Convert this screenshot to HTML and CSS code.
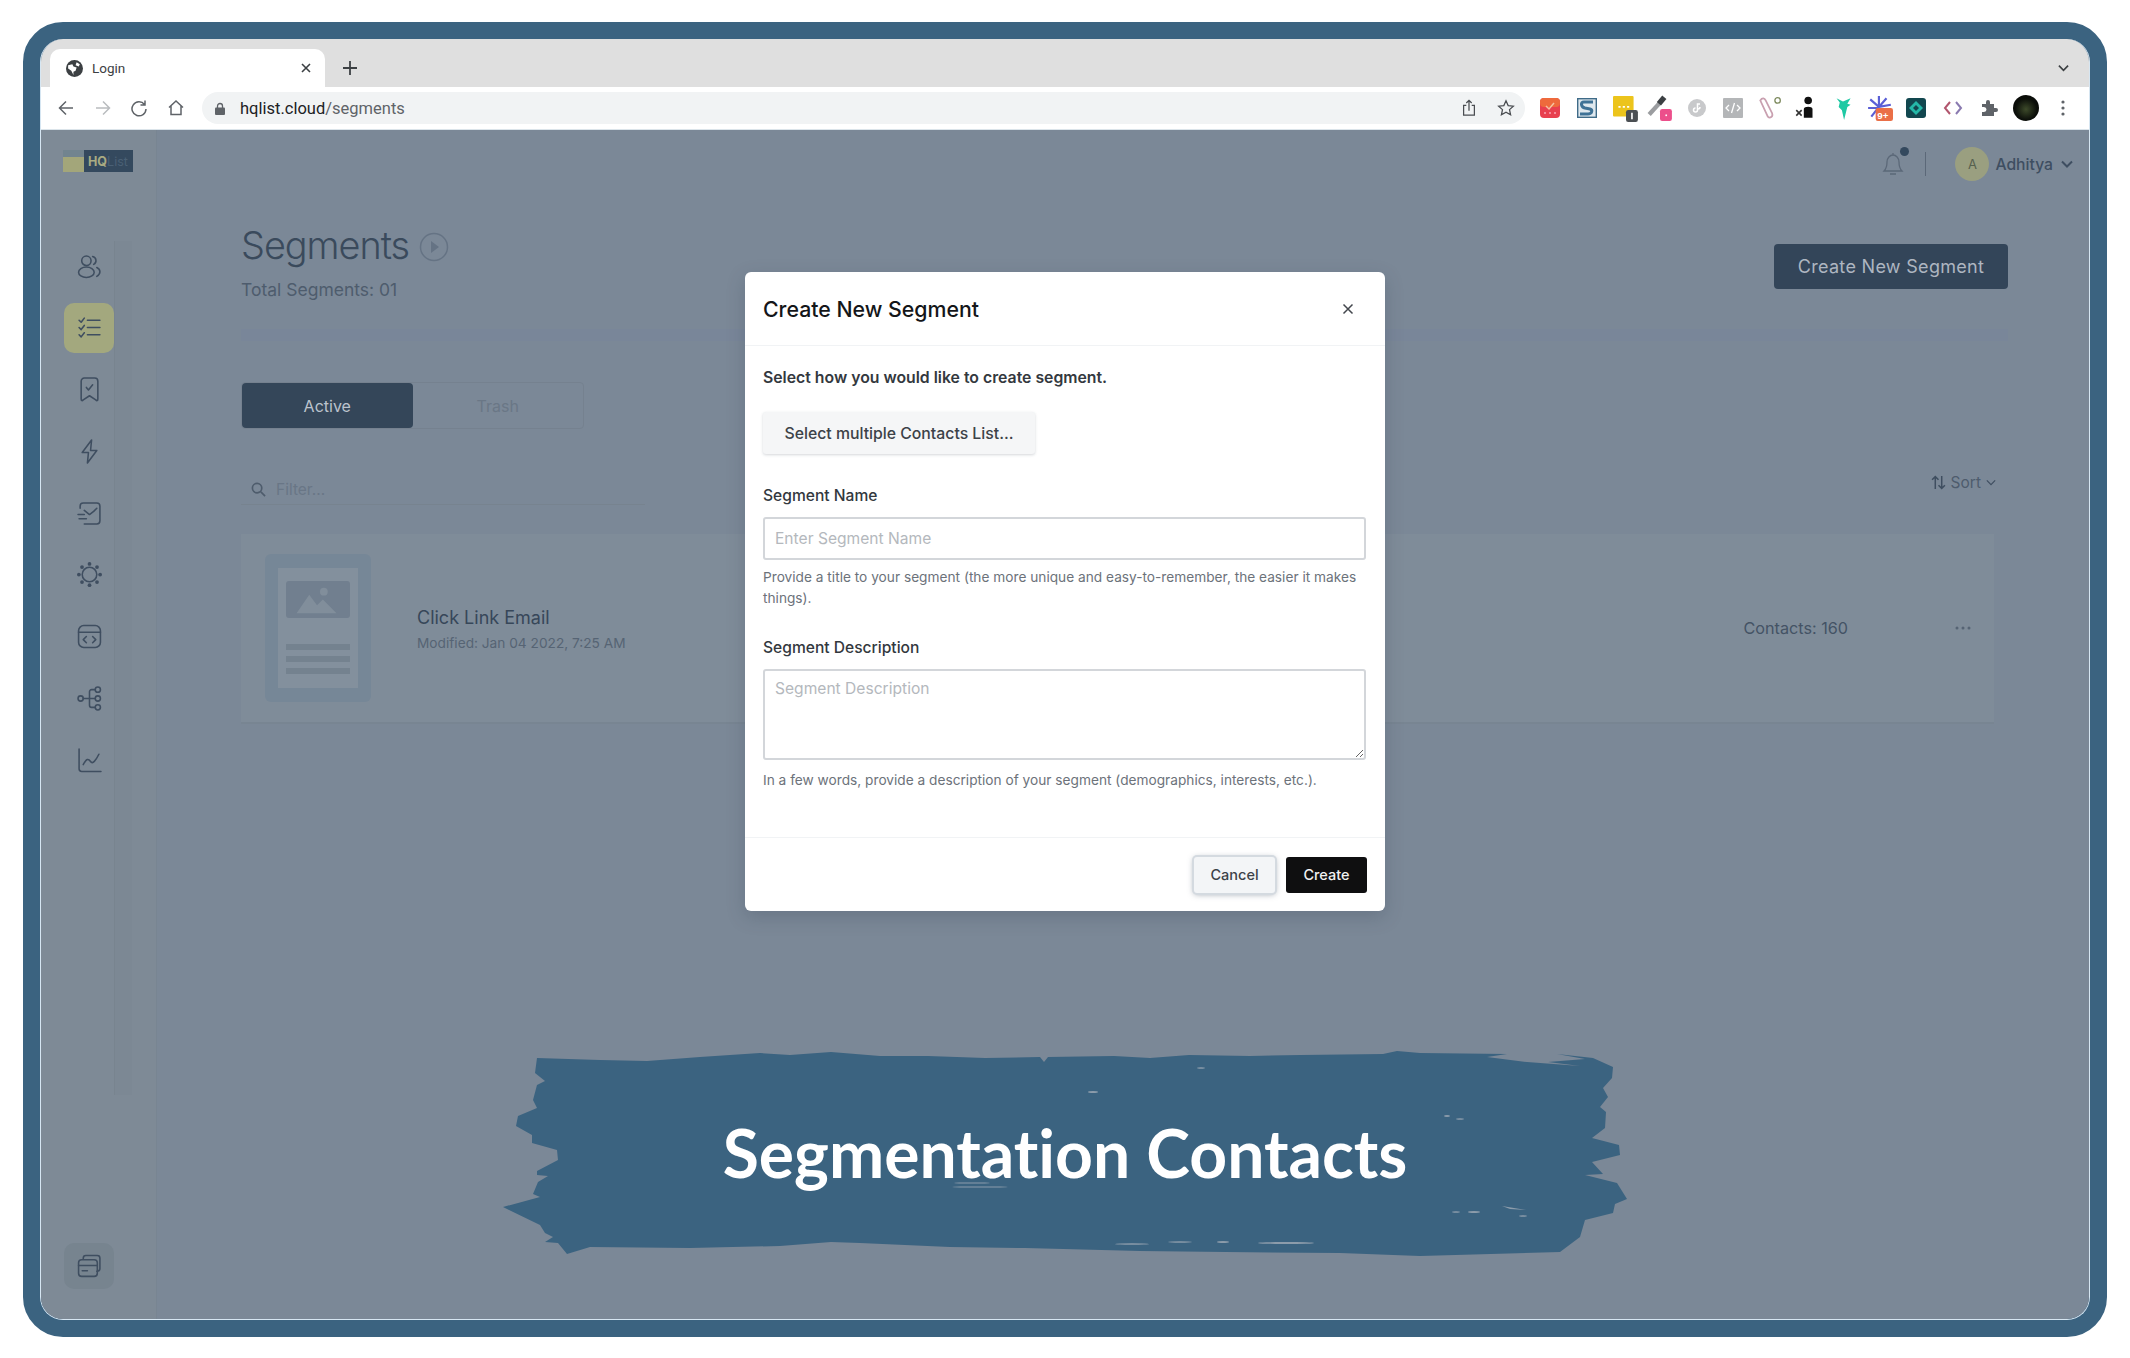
FILE: index.html
```html
<!DOCTYPE html>
<html>
<head>
	<title>Segments</title>
	<meta charset="utf-8">
	<link rel="stylesheet" href="styles.css">
</head>
<body>
<div class="frame">
<div class="screen">

	<div class="tabstrip">
		<div class="tab">
			<svg class="favicon" viewBox="0 0 16 16"><circle cx="8" cy="8" r="8" fill="#3c4043"/><path d="M2 5l4-1 1 2 3 1-1 3-2 1v3L5 10 2 8zM10 2l3 2-1 2-3-1z" fill="#fff"/></svg>
			<span class="tab-title">Login</span>
			<svg class="tab-close" viewBox="0 0 12 12"><path d="M2 2l8 8M10 2l-8 8"/></svg>
		</div>
		<svg class="tab-new" viewBox="0 0 14 14"><path d="M7 0v14M0 7h14"/></svg>
		<svg class="tab-list" viewBox="0 0 12 8"><path d="M1 1.500l5 5 5-5"/></svg>
	</div>

	<div class="toolbar">
		<div class="nav-btn"><svg viewBox="0 0 18 18"><path d="M16 9H2.500M9 2.500L2.500 9 9 15.500"/></svg></div>
		<div class="nav-btn off"><svg viewBox="0 0 18 18"><path d="M2 9h13.500M9 2.500L15.500 9 9 15.500"/></svg></div>
		<div class="nav-btn"><svg viewBox="0 0 18 18"><path d="M14.500 5.500A7 7 0 1 0 16 10M15 1.500v4.500h-4.500"/></svg></div>
		<div class="nav-btn"><svg viewBox="0 0 18 18"><path d="M2 8.500L9 2l7 6.500M4 7v8.500h10V7"/></svg></div>
		<div class="omnibox">
			<svg class="lock" viewBox="0 0 10 13"><path d="M2.500 6V4a2.500 2.500 0 0 1 5 0v2" fill="none" stroke="#5f6368" stroke-width="1.300"/><rect y="5.500" width="10" height="7.500" rx="1" fill="#5f6368"/></svg>
			<span class="url">hqlist.cloud<span class="url-path">/segments</span></span>
			<svg class="omni-icon share" viewBox="0 0 16 20"><path d="M5 7H2v11h12V7h-3M8 13V2M5 4.500L8 1.500l3 3"/></svg>
			<svg class="omni-icon" viewBox="0 0 20 20"><path d="M10 2l2.400 5.300 5.800.6-4.300 3.900 1.200 5.700L10 14.600l-5.100 2.900 1.200-5.700L1.800 7.900l5.800-.6z"/></svg>
		</div>
		<div class="extensions">
			<div class="ext"><svg viewBox="0 0 20 20"><rect width="20" height="20" rx="4" fill="#e8404f"/><rect width="20" height="9" rx="4" fill="#ee6a3c"/><path d="M6 8l3 3 5-6" fill="none" stroke="#f6c3a0" stroke-width="1.500"/><path d="M4 15h2M9 15h2M14 15h2" stroke="#f7a3b4" stroke-width="1.500"/></svg></div>
			<div class="ext"><svg viewBox="0 0 20 20"><rect x=".7" y=".7" width="18.600" height="18.600" fill="#dfe8ee" stroke="#3f6b88" stroke-width="1.400"/><path d="M16 4H7C3 4 4 9 8 10l5 1c3 1 2 5-2 5H3" fill="none" stroke="#3f7296" stroke-width="3"/></svg></div>
			<div class="ext big shifted"><svg viewBox="0 0 24 24"><rect x="0" y="0" width="19" height="19" rx="1" fill="#ecc41c"/><path d="M5 10h2M9 10h2M13 10h2" stroke="#fff" stroke-width="1.500"/><rect x="12" y="13" width="11" height="11" rx="2" fill="#4b4f53"/><path d="M17.500 15.500v6" stroke="#fff" stroke-width="1.500"/></svg></div>
			<div class="ext big"><svg viewBox="0 0 24 24"><path d="M2 18L12 7" stroke="#9b9da0" stroke-width="4"/><path d="M11 8l5-6" stroke="#3c4043" stroke-width="5"/><rect x="12" y="13" width="11" height="11" rx="2" fill="#ec4f8b"/><rect x="17" y="18" width="1.500" height="1.500" fill="#fff"/></svg></div>
			<div class="ext"><svg viewBox="0 0 20 20"><circle cx="10" cy="10" r="9" fill="#c8c9cb"/><path d="M13 6h-2.500v6a2 2 0 1 1-2-2M13 9a2 2 0 0 1-2 2" fill="none" stroke="#fff" stroke-width="1.500"/></svg></div>
			<div class="ext"><svg viewBox="0 0 20 20"><rect width="20" height="20" rx="1" fill="#b4b6b8"/><path d="M6 7l-3 3 3 3M14 7l3 3-3 3M11.500 5l-3 10" fill="none" stroke="#fff" stroke-width="1.300"/></svg></div>
			<div class="ext big"><svg viewBox="0 0 24 24"><path d="M3 5c2-3 4-2 5 0l6 12c1 3-2 5-4 3z" fill="none" stroke="#c9a0b0" stroke-width="1.600"/><circle cx="19" cy="5" r="2.500" fill="none" stroke="#7d8a5e" stroke-width="1.200"/></svg></div>
			<div class="ext big"><svg viewBox="0 0 24 24"><circle cx="14" cy="5" r="3.500" fill="#111"/><path d="M10 21v-8c0-3 8-3 8 0v8z" fill="#111"/><path d="M3 14l5 5M8 14l-5 5" stroke="#333" stroke-width="1.500"/></svg></div>
			<div class="ext big"><svg viewBox="0 0 24 24"><path d="M6 3l6 3 7-3-3 5 3 1-3 2-1 4-2 8-2-9-3-3 1-4z" fill="#1ec9a4"/></svg></div>
			<div class="ext big"><svg viewBox="0 0 24 24"><path d="M11 1v10M3 4l8 7M1 12h10M4 20l7-9M18 3l-7 8M22 9l-11 2" stroke="#5a5fd6" stroke-width="2"/><rect x="8" y="12" width="16" height="12" rx="2" fill="#ea6f47"/><text x="9.500" y="22" class="ext-badge">9+</text></svg></div>
			<div class="ext"><svg viewBox="0 0 20 20"><rect width="20" height="20" rx="3" fill="#12474f"/><path d="M10 3l7 7-7 7-7-7z" fill="#24b8a8"/><path d="M10 7l3 3-3 3-3-3z" fill="#12474f"/></svg></div>
			<div class="ext"><svg viewBox="0 0 20 16"><path d="M7 2L2 8l5 6" fill="none" stroke="#b2566e" stroke-width="2"/><path d="M13 2l5 6-5 6" fill="none" stroke="#8a7ab0" stroke-width="2"/></svg></div>
			<div class="ext"><svg viewBox="0 0 20 20"><path d="M3 6h4V4a2 2 0 0 1 4 0v2h4v4h2a2 2 0 0 1 0 4h-2v4H3v-4h2a2 2 0 0 0 0-5H3z" fill="#5f6368"/></svg></div>
			<div class="ext"><div class="profile"></div></div>
			<div class="ext"><svg class="dots" viewBox="0 0 4 16"><circle cx="2" cy="2" r="1.600"/><circle cx="2" cy="8" r="1.600"/><circle cx="2" cy="14" r="1.600"/></svg></div>
		</div>
	</div>

	<div class="app">
		<aside class="sidebar">
			<div class="logo"><span class="logo-pic"></span><span class="logo-hq">HQ</span><span class="logo-list">List</span></div>
			<nav class="menu">
				<a class="menu-item"><svg viewBox="0 0 24 24"><circle cx="9" cy="6.500" r="4.500"/><ellipse cx="9" cy="17.500" rx="7.500" ry="5"/><path d="M15 2.500a4 4 0 0 1 1 7.500M19 13c4 2 4 6 0 8.500"/></svg></a>
				<a class="menu-item active"><svg viewBox="0 0 24 24"><path d="M2 5l2 2 3-4M2 12l2 2 3-4M2 19l2 2 3-4M10 5h12M10 12h12M10 19h12"/></svg></a>
				<a class="menu-item"><svg viewBox="0 0 24 24"><path d="M4 21V4a3 3 0 0 1 3-3h10a3 3 0 0 1 3 3v17c0 2-1 2-2 1l-6-4-6 4c-1 1-2 1-2-1zM9 10l2 2.500 4-5"/></svg></a>
				<a class="menu-item"><svg viewBox="0 0 24 24"><path d="M14 1L5 13h6l-1 10 9-12h-6z"/></svg></a>
				<a class="menu-item"><svg viewBox="0 0 24 24"><path d="M3 7V5a3 3 0 0 1 3-3h13a3 3 0 0 1 3 3v14a3 3 0 0 1-3 3H7M7 9l5 4 4-3 3-3M1 13h6M2 17h7"/></svg></a>
				<a class="menu-item"><svg viewBox="0 0 24 24"><circle cx="12" cy="12" r="7"/><g class="dotted"><circle cx="12" cy="1.800" r="1.800"/><circle cx="12" cy="22.200" r="1.800"/><circle cx="1.800" cy="12" r="1.800"/><circle cx="22.200" cy="12" r="1.800"/><circle cx="4.800" cy="4.800" r="1.800"/><circle cx="19.200" cy="4.800" r="1.800"/><circle cx="4.800" cy="19.200" r="1.800"/><circle cx="19.200" cy="19.200" r="1.800"/></g></svg></a>
				<a class="menu-item"><svg viewBox="0 0 24 24"><rect x="1.500" y="1.500" width="21" height="21" rx="5"/><path d="M1.500 8h21M9 12l-3 3 3 3M15 12l3 3-3 3"/></svg></a>
				<a class="menu-item"><svg viewBox="0 0 24 24"><circle cx="3.500" cy="12" r="2.500"/><circle cx="20" cy="3.500" r="2.500"/><circle cx="20" cy="12" r="2.500"/><circle cx="20" cy="20.500" r="2.500"/><path d="M6 12h11.500M17.500 3.500H14a2 2 0 0 0-2 2v13a2 2 0 0 0 2 2h3.500"/></svg></a>
				<a class="menu-item"><svg viewBox="0 0 24 24"><path d="M2 1v19a2.500 2.500 0 0 0 2.500 2.500H23M6 16c3-6 5-6 7-3s5-1 8-7"/></svg></a>
			</nav>
			<a class="menu-item card-item"><svg viewBox="0 0 24 24"><path d="M6 5V4a2.500 2.500 0 0 1 2.500-2.500h11A2.500 2.500 0 0 1 22 4v10a2.500 2.500 0 0 1-2.500 2.500H19"/><rect x="1.500" y="5.500" width="18" height="16" rx="3"/><path d="M1.500 11h18M5 16h5"/></svg></a>
		</aside>

		<main class="main">
			<div class="topbar">
				<div class="bell">
					<svg viewBox="0 0 24 26"><path d="M3 20c2-2 3-4 3-9 0-4 3-7 6-7s6 3 6 7c0 5 1 7 3 9zM9 23h6M12 4V2"/></svg>
					<span class="bell-dot"></span>
				</div>
				<span class="top-sep"></span>
				<span class="avatar">A</span>
				<span class="user">Adhitya</span>
				<svg class="chev" viewBox="0 0 12 8"><path d="M1 1.500l5 5 5-5"/></svg>
			</div>

			<div class="content">
				<div class="head">
					<div>
						<h1 class="title">Segments <svg class="play" viewBox="0 0 30 30"><circle cx="15" cy="15" r="13.500"/><path class="play-mark" d="M12 9l8 6-8 6z"/></svg></h1>
						<p class="total">Total Segments: 01</p>
					</div>
					<button class="btn-new">Create New Segment</button>
				</div>
				<div class="head-line"></div>

				<div class="tabs">
					<span class="seg on">Active</span>
					<span class="seg">Trash</span>
				</div>

				<div class="filter-row">
					<div class="filter">
						<svg viewBox="0 0 16 16"><circle cx="6.500" cy="6.500" r="5"/><path d="M10.500 10.500L15 15"/></svg>
						<span>Filter...</span>
					</div>
					<div class="sort">
						<svg viewBox="0 0 14 14"><path d="M4 13V1.500M1 4.500l3-3 3 3M10 1v11.500M7 9.500l3 3 3-3"/></svg>
						<span>Sort</span>
						<svg class="sort-chev" viewBox="0 0 12 8"><path d="M1 1.500l5 5 5-5"/></svg>
					</div>
				</div>

				<div class="card">
					<div class="thumb">
						<div class="paper">
							<div class="pic"><svg viewBox="0 0 64 38"><path d="M10 33l13-19 8 11 6-6 14 14z"/><circle cx="38" cy="11" r="4"/></svg></div>
							<span class="bar"></span><span class="bar"></span><span class="bar"></span>
						</div>
					</div>
					<div class="card-text">
						<div class="card-name">Click Link Email</div>
						<div class="card-date">Modified: Jan 04 2022, 7:25 AM</div>
					</div>
					<span class="card-count">Contacts: 160</span>
					<svg class="card-more" viewBox="0 0 16 4"><circle cx="2" cy="2" r="1.500"/><circle cx="8" cy="2" r="1.500"/><circle cx="14" cy="2" r="1.500"/></svg>
				</div>
			</div>
		</main>

		<!-- dialog -->
		<div class="modal">
			<div class="modal-head">
				<h2>Create New Segment</h2>
				<svg class="modal-close" viewBox="0 0 12 12"><path d="M1.500 1.500l9 9M10.500 1.500l-9 9"/></svg>
			</div>
			<div class="modal-body">
				<p class="lead">Select how you would like to create segment.</p>
				<button class="btn-lists">Select multiple Contacts List...</button>
				<label class="field-label first">Segment Name</label>
				<input class="field" type="text" placeholder="Enter Segment Name">
				<p class="help">Provide a title to your segment (the more unique and easy-to-remember, the easier it makes things).</p>
				<label class="field-label">Segment Description</label>
				<textarea class="field area" placeholder="Segment Description"></textarea>
				<p class="help last">In a few words, provide a description of your segment (demographics, interests, etc.).</p>
			</div>
			<div class="modal-foot">
				<button class="btn-cancel">Cancel</button>
				<button class="btn-create">Create</button>
			</div>
		</div>

		<!-- brush caption -->
		<div class="banner">
			<svg class="brush" viewBox="500 1048 1130 215" preserveAspectRatio="none">
				<path d="M537 1058L600 1060L647 1061L700 1057L760 1053L790 1055L831 1052L880 1056L928 1056L985 1058L1040 1057L1044 1062L1048 1057L1114 1056L1150 1058L1189 1055L1250 1056L1301 1055L1383 1054L1397 1051L1420 1053L1507 1054L1487 1057L1527 1062L1580 1066L1548 1062L1585 1059L1557 1054L1593 1058L1613 1067L1612 1078L1603 1088L1608 1097L1600 1107L1606 1112L1605 1128L1592 1138L1619 1145L1620 1155L1592 1162L1603 1174L1585 1175L1617 1183L1627 1199L1615 1204L1613 1213L1585 1220L1580 1237L1560 1252L1420 1256L1340 1253L1226 1252L1140 1251L1025 1248L950 1247L860 1243L831 1242L780 1246L690 1248L590 1247L567 1254L558 1243L545 1242L553 1237L545 1233L540 1225L503 1207L540 1197L533 1194L538 1182L548 1176L537 1175L537 1171L558 1160L557 1150L532 1143L532 1135L516 1126L518 1116L537 1108L533 1100L537 1085L545 1081L535 1073z"/>
				<g class="brush-marks">
					<ellipse cx="1093" cy="1092" rx="5" ry="1"/>
					<ellipse cx="1201" cy="1068" rx="4" ry=".8"/>
					<ellipse cx="1447" cy="1116" rx="3" ry="1"/>
					<ellipse cx="1460" cy="1119" rx="4" ry=".7"/>
					<ellipse cx="1456" cy="1212" rx="4" ry=".8"/>
					<ellipse cx="1474" cy="1212" rx="6" ry="1"/>
					<path d="M1502 1206L1526 1210L1510 1209z"/>
					<ellipse cx="1523" cy="1216" rx="4" ry=".7"/>
					<ellipse cx="1132" cy="1244" rx="17" ry=".8"/>
					<ellipse cx="1180" cy="1242" rx="12" ry=".8"/>
					<ellipse cx="1223" cy="1242" rx="6" ry="1"/>
					<ellipse cx="1286" cy="1243" rx="28" ry="1"/>
					<ellipse cx="980" cy="1187" rx="28" ry=".6"/>
					<ellipse cx="972" cy="1183" rx="18" ry=".6"/>
				</g>
			</svg>
			<span class="banner-text">Segmentation Contacts</span>
		</div>
	</div>

</div>
</div>
</body>
</html>
```

FILE: styles.css
```css
*{
	margin: 0;
	padding: 0;
	box-sizing: border-box;
}
html, body{
	height: 100%;
	overflow: hidden;
	background: #fff;
}
body{
	padding: 22px 23px 21px;
	font-family: Inter, "Liberation Sans", sans-serif;
}
button{
	font-family: inherit;
	border: none;
}

/* outer blue frame */
.frame{
	height: 100%;
	border: 17px solid #3b6380;
	border-radius: 40px;
	background: #3b6380;
}
.screen{
	display: flex;
	flex-direction: column;
	height: 100%;
	overflow: hidden;
	border: 1px solid #d6e6f2;
	border-top: none;
	border-radius: 23px;
}

/* browser chrome */
.tabstrip{
	display: flex;
	align-items: flex-start;
	height: 48px;
	padding-top: 10px;
	padding-left: 9px;
	background: #dfdfdf;
	flex-shrink: 0;
}
.tab{
	display: flex;
	align-items: center;
	width: 275px;
	height: 38px;
	padding: 0 13px 0 16px;
	background: #fff;
	border-radius: 10px 10px 0 0;
}
.favicon{
	width: 17px;
	height: 17px;
	margin-right: 9px;
}
.tab-title{
	flex: 1;
	font: 13.500px Roboto, sans-serif;
	color: #3c4043;
}
.tab-close{
	width: 12px;
	height: 12px;
	fill: none;
	stroke: #3c4043;
	stroke-width: 1.600;
}
.tab-new{
	width: 14px;
	height: 14px;
	margin: 12px 0 0 18px;
	fill: none;
	stroke: #3c4043;
	stroke-width: 1.800;
}
.tab-list{
	width: 11px;
	height: 8px;
	margin: 15px 20px 0 auto;
	fill: none;
	stroke: #3c4043;
	stroke-width: 1.800;
}
.toolbar{
	display: flex;
	align-items: center;
	height: 43px;
	padding-left: 7px;
	background: #fff;
	border-bottom: 1px solid #dbe4ea;
	flex-shrink: 0;
}
.nav-btn{
	display: flex;
	justify-content: center;
	width: 36.500px;
}
.nav-btn svg{
	width: 18px;
	height: 18px;
	fill: none;
	stroke: #5f6368;
	stroke-width: 1.500;
}
.nav-btn.off svg{
	stroke: #b9bcbf;
}
.omnibox{
	display: flex;
	align-items: center;
	width: 1323px;
	height: 32px;
	margin-left: 8px;
	padding: 0 10px 0 13px;
	background: #f1f3f4;
	border-radius: 16px;
}
.lock{
	width: 10px;
	height: 13px;
	margin-right: 15px;
}
.url{
	flex: 1;
	font: 16.500px Roboto, sans-serif;
	color: #202124;
}
.url-path{
	color: #5f6368;
}
.omni-icon{
	width: 18px;
	height: 18px;
	margin-left: 19px;
	fill: none;
	stroke: #4a4d51;
	stroke-width: 1.400;
}
.extensions{
	display: flex;
	margin-left: 7px;
}
.ext{
	display: flex;
	align-items: center;
	justify-content: center;
	width: 36.600px;
}
.ext svg{
	width: 20px;
	height: 20px;
}
.ext.big svg{
	width: 26px;
	height: 26px;
}
.ext.shifted svg{
	margin-left: 6px;
	margin-top: 2px;
}
.ext svg.dots{
	width: 4px;
	height: 16px;
	fill: #5f6368;
}
.ext-badge{
	font: bold 9px "Liberation Sans", sans-serif;
	fill: #fff;
}
.profile{
	width: 26px;
	height: 26px;
	border-radius: 50%;
	background: radial-gradient(circle at 50% 55%, #3d4a2a 0, #0c0f0a 55%, #050505 100%);
}

/* app under the dialog */
.app{
	position: relative;
	display: flex;
	flex: 1;
	min-height: 0;
	background: #7b8897;
}
.sidebar{
	display: flex;
	flex-direction: column;
	width: 116px;
	padding: 20px 0 30px 23px;
	background: #7e8a96;
	border-right: 1px solid #788592;
}
.logo{
	display: flex;
	align-items: center;
	width: 70px;
	height: 22px;
	margin-left: -1px;
	background: #34495e;
	font-size: 12.500px;
	font-weight: 700;
}
.logo-pic{
	width: 21px;
	height: 100%;
	margin-right: 4px;
	background: linear-gradient(#72848f 30%, #a3a67a 30%);
}
.logo-hq{
	color: #a9ab82;
}
.logo-list{
	color: #4a6075;
	font-weight: 400;
}
.menu{
	display: flex;
	flex-direction: column;
	gap: 11.800px;
	width: 51px;
	margin-top: 69px;
	padding-bottom: 310px;
	border-right: 1px solid #78848f;
	box-shadow: 17px 0 0 #7c8894;
}
.menu-item{
	display: flex;
	align-items: center;
	justify-content: center;
	width: 50px;
	height: 50px;
	border-radius: 10px;
}
.menu-item svg{
	width: 25px;
	height: 25px;
	fill: none;
	stroke: #3f4e60;
	stroke-width: 1.500;
	stroke-linecap: round;
	stroke-linejoin: round;
}
.menu-item .dotted{
	fill: #3f4e60;
	stroke: none;
}
.menu-item.active{
	background: #a3a87e;
}
.card-item{
	margin-top: auto;
	height: 46px;
	background: #77848f;
}

.main{
	flex: 1;
	min-width: 0;
}
.topbar{
	display: flex;
	align-items: center;
	height: 68px;
	padding-right: 16px;
	justify-content: flex-end;
	color: #3f4e60;
}
.bell{
	position: relative;
	width: 24px;
	height: 26px;
}
.bell svg{
	width: 24px;
	height: 26px;
	fill: none;
	stroke: #5b6878;
	stroke-width: 1.300;
}
.bell-dot{
	position: absolute;
	top: -4px;
	right: -4px;
	width: 9px;
	height: 9px;
	border-radius: 50%;
	background: #34495e;
}
.top-sep{
	width: 1px;
	height: 24px;
	margin: 0 29px 0 20px;
	background: #5b6878;
}
.avatar{
	display: flex;
	align-items: center;
	justify-content: center;
	width: 34px;
	height: 34px;
	margin-right: 6px;
	border-radius: 50%;
	background: #9a9f80;
	font-size: 13px;
	color: #56604e;
}
.user{
	font-size: 15.700px;
	font-weight: 500;
	color: #3e4e61;
}
.chev{
	width: 12px;
	height: 8px;
	margin-left: 8px;
	fill: none;
	stroke: #3e4e61;
	stroke-width: 2;
}

.content{
	padding: 24px 81px 0 84px;
}
.head{
	display: flex;
	justify-content: space-between;
	align-items: flex-start;
}
.title{
	display: flex;
	align-items: center;
	gap: 10px;
	height: 46px;
	font-size: 37.800px;
	line-height: 46px;
	font-weight: 300;
	letter-spacing: -1px;
	color: #3a4a5c;
}
.play{
	width: 30px;
	height: 30px;
	margin-top: 4px;
	fill: none;
	stroke: #657384;
	stroke-width: 1.500;
}
.play-mark{
	fill: #657384;
	stroke: none;
}
.total{
	margin-top: 10px;
	font-size: 17.500px;
	line-height: 24px;
	color: #4e5c6d;
}
.btn-new{
	width: 234px;
	height: 45px;
	margin-top: 22px;
	background: #334559;
	border-radius: 4px;
	font-size: 18px;
	letter-spacing: .3px;
	color: #aeb6c1;
}
.head-line{
	height: 12px;
	margin: 27px 0 41px;
	background: #798699;
}
.tabs{
	display: flex;
	width: 343px;
	height: 47px;
	border: 1px solid #75818f;
	border-radius: 4px;
}
.seg{
	display: flex;
	align-items: center;
	justify-content: center;
	flex: 1;
	font-size: 16px;
	color: #6a7786;
}
.seg.on{
	background: #344659;
	border-radius: 4px;
	color: #bcc3cd;
}
.filter-row{
	display: flex;
	justify-content: space-between;
	align-items: flex-start;
	margin: 44px 12px 0 0;
}
.filter{
	display: flex;
	align-items: center;
	gap: 10px;
	width: 404px;
	height: 32px;
	padding: 2px 0 0 10px;
	border-bottom: 1px solid #77838f;
	font-size: 15.500px;
	color: #697686;
}
.filter svg{
	width: 15px;
	height: 15px;
	fill: none;
	stroke: #4e5c6c;
	stroke-width: 1.800;
}
.sort{
	display: flex;
	align-items: center;
	gap: 5px;
	height: 18px;
	font-size: 15.500px;
	color: #4e5c6d;
}
.sort svg{
	width: 15px;
	height: 15px;
	fill: none;
	stroke: #3f4e60;
	stroke-width: 1.400;
}
.sort svg.sort-chev{
	width: 10px;
	height: 7px;
}
.card{
	display: flex;
	align-items: center;
	height: 190px;
	margin: 29px 14px 0 0;
	padding: 0 23px 0 24px;
	background: #7f8c99;
	border-bottom: 2px solid #788592;
}
.thumb{
	display: flex;
	align-items: center;
	justify-content: center;
	width: 106px;
	height: 148px;
	margin-right: 46px;
	background: #768797;
	border-radius: 6px;
}
.paper{
	display: flex;
	flex-direction: column;
	gap: 6px;
	width: 80px;
	height: 120px;
	padding: 13px 8px 0;
	background: #83909d;
}
.pic{
	height: 37px;
	margin-bottom: 20px;
	background: #717f8f;
	border-radius: 3px;
}
.pic svg{
	display: block;
	width: 100%;
	height: 100%;
	fill: #818e9b;
}
.bar{
	height: 6px;
	background: #74828f;
}
.card-text{
	padding-top: 2px;
}
.card-name{
	font-size: 18px;
	line-height: 24px;
	color: #374759;
}
.card-date{
	margin-top: 3px;
	font-size: 13.700px;
	line-height: 20px;
	color: #566474;
}
.card-count{
	margin-left: auto;
	margin-right: 107px;
	font-size: 16.200px;
	color: #445365;
}
.card-more{
	width: 16px;
	height: 4px;
	fill: #566474;
}

/* dialog */
.modal{
	position: absolute;
	left: 704px;
	top: 142px;
	display: flex;
	flex-direction: column;
	width: 640px;
	height: 639px;
	background: #fff;
	border-radius: 6px;
	box-shadow: 0 6px 18px rgba(50, 65, 85, 0.25);
}
.modal-head{
	display: flex;
	align-items: center;
	justify-content: space-between;
	height: 74px;
	padding: 0 31px 0 18px;
	border-bottom: 1px solid #f1f3f5;
	flex-shrink: 0;
}
.modal-head h2{
	font-size: 21.300px;
	font-weight: 500;
	color: #141619;
}
.modal-close{
	width: 12px;
	height: 12px;
	fill: none;
	stroke: #43474d;
	stroke-width: 1.500;
}
.modal-body{
	flex: 1;
	padding: 21px 18px 0 18px;
}
.lead{
	font-size: 15.800px;
	line-height: 21px;
	font-weight: 600;
	color: #33383e;
}
.btn-lists{
	display: block;
	width: 272px;
	height: 42px;
	margin-top: 24px;
	background: #f5f6f7;
	border-radius: 3px;
	box-shadow: 0 1px 3px rgba(60, 70, 80, 0.22);
	font-size: 15.800px;
	font-weight: 500;
	color: #3c4248;
}
.field-label{
	display: block;
	margin-top: 28px;
	font-size: 15.600px;
	line-height: 22px;
	font-weight: 500;
	color: #33383e;
}
.field-label.first{
	margin-top: 31px;
}
.field{
	display: block;
	width: 603px;
	height: 43px;
	margin: 10px 0 0 0;
	padding: 0 10px 1px;
	background: #fff;
	border: 2px solid #d3d6da;
	border-radius: 3px;
	outline: none;
	font-family: inherit;
	font-size: 15.600px;
}
.field::placeholder{
	color: #b4b8bd;
}
.area{
	height: 91px;
	padding-top: 7px;
	line-height: 22px;
}
.help{
	margin-top: 7px;
	font-size: 13.700px;
	line-height: 21px;
	color: #6c727a;
}
.help.last{
	margin-top: 10px;
}
.modal-foot{
	display: flex;
	justify-content: flex-end;
	align-items: center;
	gap: 11px;
	height: 74px;
	padding: 0 18px;
	border-top: 1px solid #f1f3f5;
	flex-shrink: 0;
}
.btn-cancel, .btn-create{
	width: 81px;
	height: 36px;
	border-radius: 3px;
	font-size: 14.500px;
	font-weight: 500;
}
.btn-cancel{
	background: #f3f5f7;
	color: #3c4248;
	box-shadow: 0 0 0 2px #d4dae0, 0 1px 6px rgba(60, 75, 95, 0.55);
}
.btn-create{
	background: #0f0f10;
	color: #f2f2f2;
}

/* brush caption */
.banner{
	position: absolute;
	left: 459px;
	top: 918px;
	display: flex;
	align-items: center;
	justify-content: center;
	width: 1130px;
	height: 215px;
}
.brush{
	position: absolute;
	left: 0;
	top: 0;
	width: 100%;
	height: 100%;
	fill: #3b6380;
}
.brush-marks{
	fill: #8c9cab;
}
.banner-text{
	position: relative;
	margin-top: -6px;
	font-family: Lato, sans-serif;
	font-size: 66px;
	font-weight: 700;
	font-variant-ligatures: none;
	color: #fff;
}
```
